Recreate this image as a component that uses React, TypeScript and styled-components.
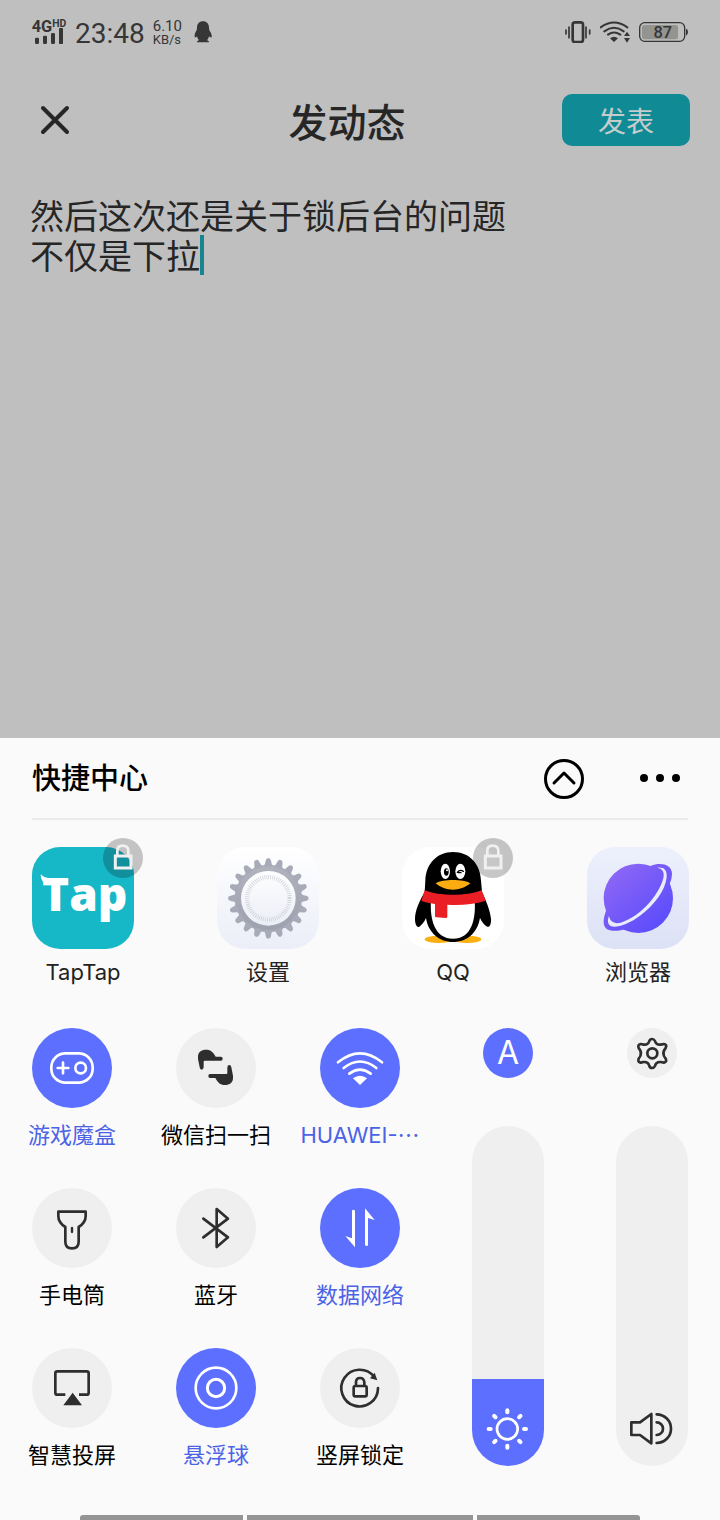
import React, { useState } from 'react';
import styled, { createGlobalStyle, css } from 'styled-components';

const cjk = '"Noto Sans CJK SC", sans-serif';
const accent = '#5c6fff';
const ink = '#2e2e2e';

const GlobalStyle = createGlobalStyle`
  *, *::before, *::after { box-sizing: border-box; }
  body { margin: 0; background: #bfbfbf; font-family: Inter, ${cjk}; }
  button { border: 0; padding: 0; background: none; color: inherit; font: inherit; cursor: pointer; }
  svg { display: block; }
`;

const Screen = styled.main`
  display: flex;
  flex-direction: column;
  min-height: 100vh;
`;

/* ---------- status bar ---------- */

const StatusBar = styled.div`
  display: flex;
  align-items: center;
  justify-content: space-between;
  height: 64px;
  padding: 0 32px;
  color: #363636;
  font-family: Roboto, sans-serif;
`;

const StatusGroup = styled.div<{ $gap: number }>`
  display: flex;
  align-items: center;
  gap: ${(p) => p.$gap}px;
`;

const Clock = styled.time`
  font-size: 28px;
  line-height: 32px;
  padding-top: 4px;
`;

const Speed = styled.div`
  display: flex;
  flex-direction: column;
  font-size: 15px;
  line-height: 13px;
  padding: 2px 5px 0 1px;
`;

const SpeedUnit = styled.span`
  font-size: 13px;
`;

/* ---------- composer ---------- */

const Composer = styled.section`
  display: flex;
  flex: 1;
  flex-direction: column;
  min-height: 400px;
  color: #262626;
  font-family: ${cjk};
`;

const ComposerHeader = styled.header`
  display: grid;
  grid-template-columns: 102px 1fr 128px;
  align-items: center;
  padding: 30px 30px 0;
`;

const CloseButton = styled.button`
  justify-self: start;
`;

const ComposerTitle = styled.h1`
  margin: 0;
  font-size: 39px;
  font-weight: 500;
  line-height: 50px;
  text-align: center;
`;

const PublishButton = styled.button`
  height: 52px;
  border-radius: 10px;
  background: #108b96;
  color: #c4cccc;
  font-size: 28px;
`;

const Editor = styled.div`
  position: relative;
  display: flex;
  flex: 1;
  margin: 49px 30px 0;
  font-size: 34px;
  line-height: 40px;
`;

const EditorInput = styled.textarea`
  flex: 1;
  padding: 0;
  border: 0;
  outline: 0;
  resize: none;
  background: transparent;
  color: inherit;
  caret-color: transparent;
  font: inherit;
`;

const Caret = styled.span<{ $column: number; $line: number }>`
  position: absolute;
  left: ${(p) => p.$column}em;
  top: ${(p) => p.$line * 40}px;
  width: 4px;
  height: 40px;
  background: #16858f;
  pointer-events: none;
`;

/* ---------- shortcut sheet ---------- */

const Sheet = styled.section`
  display: flex;
  flex-direction: column;
  background: #fafafa;
  color: #000;
`;

const SheetHeader = styled.header`
  display: flex;
  align-items: center;
  gap: 54px;
  height: 82px;
  margin: 0 32px;
  padding-right: 8px;
  border-bottom: 2px solid #ebebeb;
`;

const SheetTitle = styled.h2`
  flex: 1;
  margin: 0;
  font-family: ${cjk};
  font-size: 29px;
  font-weight: 500;
  line-height: 36px;
  padding-bottom: 4px;
`;

const AppRow = styled.nav`
  display: flex;
  justify-content: space-between;
  padding: 27px 31px 0 32px;
`;

const AppButton = styled.button`
  display: flex;
  flex-direction: column;
  align-items: center;
  gap: 8px;
  color: #222;
  font-size: 22px;
  line-height: 30px;
`;

const AppIcon = styled.span<{ $background: string }>`
  position: relative;
  width: 102px;
  height: 102px;
  border-radius: 28px;
  background: ${(p) => p.$background};
`;

const LockBadge = styled.span`
  position: absolute;
  top: -9px;
  right: -9px;
  width: 40px;
  height: 40px;
  border-radius: 50%;
  background: rgba(0, 0, 0, 0.22);
`;

const Controls = styled.div`
  display: flex;
  padding-top: 41px;
`;

const TileGrid = styled.div`
  display: grid;
  grid-template-columns: repeat(3, 1fr);
  row-gap: 37px;
  width: 60%;
`;

const TileButton = styled.button<{ $on: boolean }>`
  display: flex;
  flex-direction: column;
  align-items: center;
  gap: 11px;
  color: ${(p) => (p.$on ? '#4c63e6' : '#000')};
  font-size: 22px;
  line-height: 32px;
  white-space: nowrap;
`;

const Ellipsis = styled.span`
  font-family: ${cjk};
  line-height: 0;
`;

const discColours = css<{ $on: boolean }>`
  border-radius: 50%;
  background: ${(p) => (p.$on ? accent : '#efefef')};
  color: ${(p) => (p.$on ? '#fff' : ink)};
`;

const TileDisc = styled.span<{ $on: boolean }>`
  ${discColours}
  width: 80px;
  height: 80px;
`;

const SliderArea = styled.div`
  display: flex;
  flex: 1;
  justify-content: space-between;
  padding: 0 32px 0 40px;
`;

const SliderColumn = styled.div`
  display: flex;
  flex-direction: column;
  align-items: center;
  gap: 48px;
  width: 72px;
`;

const RoundButton = styled.button<{ $on: boolean }>`
  ${discColours}
  width: 50px;
  height: 50px;
  font-size: 32px;
  line-height: 50px;
`;

const SliderLabel = styled.label<{ $on: boolean }>`
  position: relative;
  color: ${(p) => (p.$on ? '#fff' : ink)};
`;

const SliderInput = styled.input`
  display: block;
  appearance: none;
  writing-mode: vertical-lr;
  direction: rtl;
  width: 72px;
  height: 340px;
  margin: 0;
  border-radius: 36px;
  outline: 0;
  background: linear-gradient(to top, ${accent} var(--level), #efefef var(--level));

  &::-webkit-slider-thumb {
    appearance: none;
    width: 72px;
    height: 1px;
    background: transparent;
  }
`;

const SliderIcon = styled.span`
  position: absolute;
  bottom: 0;
  left: 0;
  pointer-events: none;
`;

const GestureBar = styled.div`
  display: flex;
  gap: 4px;
  margin: 44px 80px 0;
`;

const GestureHandle = styled.span<{ $grow: number; $radius: string }>`
  flex: ${(p) => p.$grow} 1 0;
  height: 5px;
  border-radius: ${(p) => p.$radius};
  background: #949494;
`;

/* ---------- icons ---------- */

type IconProps = { w: number; h?: number; box: string; children: React.ReactNode };

const Icon = ({ w, h = w, box, children }: IconProps) => (
  <svg width={w} height={h} viewBox={box} aria-hidden="true" fill="none" stroke="none">
    {children}
  </svg>
);

const line = (width: number) => ({
  stroke: 'currentColor',
  strokeWidth: width,
  strokeLinecap: 'round' as const,
  strokeLinejoin: 'round' as const,
});

const SignalIcon = () => (
  <Icon w={36} h={28} box="36 51 108 84">
    <g fill="currentColor" fontFamily="Roboto, sans-serif" fontWeight="700">
      <text x="35" y="93" fontSize="49">4G</text>
      <text x="97" y="78" fontSize="31">HD</text>
      <rect x="45" y="110" width="12" height="19" rx="4" />
      <rect x="69" y="104" width="12" height="25" rx="4" />
      <rect x="93" y="96" width="12" height="33" rx="4" />
      <rect x="117" y="81" width="12" height="48" rx="2" />
    </g>
  </Icon>
);

const NoticeIcon = () => (
  <Icon w={18} h={22} box="523 65 54 66">
    <path
      fill="currentColor"
      d="M550 66C539 66 532 74 532 85L531 93C527 99 524 106 525 112C526 117 530 114 532 111C533 116 535 120 538 123C534 124 532 126 532 129H549H568C568 126 566 124 562 123C565 120 567 116 568 111C571 114 575 117 576 112C577 106 573 99 569 93L568 85C568 74 561 66 550 66Z"
    />
  </Icon>
);

const VibrateIcon = () => (
  <Icon w={26} h={22} box="75 63 78 66">
    <rect x="98" y="67" width="31" height="59" rx="7" stroke="currentColor" strokeWidth="8" />
    <path d="M87 81V113M78 90V102M138 81V113M149 90V102" {...line(5)} />
  </Icon>
);

const StatusWifiIcon = () => (
  <Icon w={30} h={22} box="180 63 90 66">
    <path d="M182 82Q222 53 262 82M193 94Q222 73 251 94M204 104Q222 91 241 104" {...line(6)} />
    <path d="M222 126L210 115Q222 106 234 115ZM261 95L270 108H252ZM252 114H270L261 128Z" fill="currentColor" />
  </Icon>
);

const BatteryIcon = () => (
  <Icon w={49} h={22} box="297 63 147 66">
    <rect x="299" y="68" width="135" height="56" rx="15" stroke="currentColor" strokeWidth="4" />
    <rect x="306" y="75" width="108" height="43" rx="7" fill="#93938f" />
    <path d="M438 86Q444 87 444 96T438 107Z" fill="currentColor" />
    <text x="368" y="113" fontSize="49" fontWeight="500" fontFamily="Roboto, sans-serif" textAnchor="middle" fill="currentColor">
      87
    </text>
  </Icon>
);

const CloseIcon = () => (
  <Icon w={50} box="0 0 50 50">
    <path d="M13 13L37 37M37 13L13 37" {...line(4)} />
  </Icon>
);

const LockIcon = () => (
  <Icon w={40} box="249 24 120 120">
    <path d="M292 78V62Q292 47 308 47T325 62V78" stroke="#f0f0f0" strokeWidth="8" />
    <rect x="286" y="78" width="47" height="36" stroke="#f0f0f0" strokeWidth="9" />
  </Icon>
);

const TapTapArt = () => (
  <Icon w={102} box="36 51 306 306">
    <text x="66" y="243" fontFamily="'Open Sans', sans-serif" fontWeight="800" fontSize="138" fill="#fff">
      Tap
    </text>
    <path d="M62 133Q70 142 84 144L84 162Q62 160 62 133Z" fill="#fff" />
  </Icon>
);

const teeth = Array.from({ length: 20 }, (_, i) => i * 18);

const SettingsArt = () => (
  <Icon w={102} box="591 51 306 306">
    <defs>
      <linearGradient id="gearMetal" x1="0" y1="85" x2="0" y2="325" gradientUnits="userSpaceOnUse">
        <stop offset="0" stopColor="#b3b5bf" />
        <stop offset="1" stopColor="#9b9fac" />
      </linearGradient>
      <linearGradient id="gearFace" x1="0" y1="120" x2="0" y2="285" gradientUnits="userSpaceOnUse">
        <stop offset="0" stopColor="#ffffff" />
        <stop offset="1" stopColor="#eceef6" />
      </linearGradient>
    </defs>
    <circle cx="745" cy="205" r="101" fill="url(#gearMetal)" />
    {teeth.map((angle) => (
      <path
        key={angle}
        d="M729 110Q736 104 737 92Q738 84 745 84T753 92Q754 104 761 110Z"
        fill="#a8abb7"
        transform={`rotate(${angle} 745 205)`}
      />
    ))}
    <circle cx="745" cy="205" r="82" fill="url(#gearFace)" />
    <circle cx="745" cy="205" r="64" stroke="#c9cbd3" strokeWidth="12" strokeDasharray="2 4" />
    <circle cx="745" cy="205" r="57" fill="url(#gearFace)" stroke="#e3e4ea" strokeWidth="1" />
  </Icon>
);

const QqArt = () => (
  <Icon w={102} box="36 51 306 306">
    <ellipse cx="146" cy="328" rx="42" ry="11" fill="#fbb011" />
    <ellipse cx="232" cy="328" rx="42" ry="11" fill="#fbb011" />
    <path
      fill="#000"
      d="M189 66C140 66 107 103 106 152L104 185C90 212 74 240 75 270C76 286 82 293 88 290C96 285 103 275 108 264C115 310 150 336 189 336C230 336 262 310 270 264C276 276 284 287 292 290C300 292 304 280 303 266C300 240 288 212 276 186L273 152C271 103 240 66 189 66Z"
    />
    <path d="M123 212C119 268 134 326 189 326C244 326 258 268 254 212Z" fill="#fff" />
    <path
      fill="#ea1f25"
      d="M104 181C150 199 230 199 275 181L287 212C250 223 210 227 172 224V260Q172 264 168 264L139 262Q135 262 135 258V222Q112 219 94 213Z"
    />
    <ellipse cx="166" cy="124" rx="14" ry="23" fill="#fff" />
    <ellipse cx="211" cy="124" rx="15" ry="23" fill="#fff" />
    <ellipse cx="169" cy="126" rx="7" ry="11" fill="#000" />
    <circle cx="171" cy="121" r="3" fill="#fff" />
    <path d="M202 127Q210 117 220 124M205 128H213" stroke="#000" strokeWidth="4" strokeLinecap="round" />
    <path d="M137 160C158 147 220 147 241 160C226 173 206 179 189 179C170 179 151 172 137 160Z" fill="#fbac10" />
  </Icon>
);

const BrowserArt = () => (
  <Icon w={102} box="591 51 306 306">
    <defs>
      <linearGradient id="planet" x1="670" y1="120" x2="820" y2="290" gradientUnits="userSpaceOnUse">
        <stop offset="0" stopColor="#8d66f6" />
        <stop offset="1" stopColor="#5a4cfb" />
      </linearGradient>
    </defs>
    <g fill="url(#planet)">
      <circle cx="745" cy="205" r="104" />
      <path d="M782 108C810 96 846 102 846 132Q846 148 838 164L790 190ZM650 238C640 262 636 286 650 297C664 306 690 302 712 296L700 220Z" />
    </g>
    <path
      d="M802 113C822 111 832 120 830 142C826 182 792 226 752 256C718 282 682 294 664 289C652 284 652 270 657 258C660 274 673 283 692 278C722 268 752 247 778 218C804 188 819 157 821 138C822 123 816 116 802 113Z"
      fill="#e9ecfb"
    />
  </Icon>
);

const ChevronIcon = () => (
  <Icon w={40} h={42} box="0 0 40 42">
    <circle cx="20" cy="22" r="18.5" stroke="currentColor" strokeWidth="3" />
    <path d="M10 26L20 16L30 26" {...line(3)} />
  </Icon>
);

const MoreIcon = () => (
  <Icon w={42} h={42} box="0 0 42 42">
    <g fill="currentColor">
      <circle cx="6" cy="21" r="4" />
      <circle cx="22" cy="21" r="4" />
      <circle cx="38" cy="21" r="4" />
    </g>
  </Icon>
);

const GameArt = () => (
  <>
    <rect x="124" y="130" width="124" height="88" rx="42" {...line(8)} />
    <path d="M143 174H175M159 158V190" {...line(8)} />
    <circle cx="212" cy="174" r="16" {...line(8)} />
  </>
);

const scanHand =
  'M564 140C564 126 574 119 588 119C603 119 610 127 617 140H633Q638 140 638 146T633 152H584Q581 152 581 155V172Q580 179 575 179T569 172L564 147Z';

const ScanArt = () => (
  <g fill="currentColor">
    <path d={scanHand} />
    <path d={scanHand} transform="rotate(180 616.5 172)" />
  </g>
);

const WifiArt = () => (
  <>
    <path d="M984 157Q1050 103 1116 157M1001 174Q1050 135 1099 174M1018 191Q1050 167 1082 191" {...line(8)} />
    <path d="M1050 225L1029 205Q1050 190 1071 205Z" fill="currentColor" />
  </>
);

const TorchArt = () => (
  <>
    <path d="M145 125H227V138Q227 158 206 171V215Q206 235 186 235T166 215V171Q145 158 145 138Z" {...line(8)} />
    <path d="M186 174V186" {...line(7)} />
  </>
);

const BluetoothArt = () => <path d="M580 146L654 202L620 231V117L654 146L580 202" {...line(8)} />;

const DataArt = () => (
  <g fill="currentColor">
    <path d="M1026 123Q1026 119 1030 119T1035 123V232L1006 198L1026 205Z" />
    <path d="M1065 115L1094 150L1074 144V224Q1074 228 1070 228T1065 224Z" />
  </g>
);

const CastArt = () => (
  <>
    <path d="M166 194H142Q136 194 136 188V130Q136 124 142 124H230Q236 124 236 130V188Q236 194 230 194H207" stroke="currentColor" strokeWidth="8" />
    <path d="M188 188L216 226H160Z" fill="currentColor" />
  </>
);

const BallArt = () => (
  <>
    <circle cx="618" cy="174" r="61" {...line(8)} />
    <circle cx="618" cy="174" r="26" {...line(9)} />
  </>
);

const RotationArt = () => (
  <>
    <path d="M1104 174A55 55 0 1 1 1092 140" {...line(8)} />
    <path d="M1094 128L1102 151L1080 145Z" fill="currentColor" />
    <rect x="1031" y="168" width="39" height="31" rx="5" {...line(8)} />
    <path d="M1038 167V157Q1038 144 1050 144T1063 157V167" {...line(8)} />
  </>
);

const GearIcon = () => (
  <Icon w={50} box="531 54 150 150">
    <path
      d="M598 93Q600 87 606 87T615 93Q618 105 632 104L642 102Q652 104 647 114Q633 130 647 146Q652 156 642 158L632 156Q618 155 615 168Q612 174 606 174T598 168Q595 155 581 156L572 158Q562 156 566 146Q580 130 566 114Q562 104 572 102L581 104Q595 105 598 93Z"
      {...line(8)}
    />
    <circle cx="607" cy="130" r="15" {...line(8)} />
  </Icon>
);

const SunIcon = () => (
  <Icon w={72} box="66 102 216 216">
    <circle cx="172" cy="207" r="31" {...line(8)} />
    {[0, 45, 90, 135, 180, 225, 270, 315].map((angle) => (
      <path key={angle} d="M172 151V157" {...line(12)} transform={`rotate(${angle} 172 207)`} />
    ))}
  </Icon>
);

const SpeakerIcon = () => (
  <Icon w={72} box="498 102 216 216">
    <path d="M544 187H570L604 162V250L570 225H544Z" {...line(8)} />
    <path d="M620 187A19 19 0 0 1 620 225M620 163A43 43 0 0 1 620 249" {...line(8)} />
  </Icon>
);

/* ---------- data ---------- */

const apps = [
  { name: 'TapTap', background: '#16b8c8', locked: true, Art: TapTapArt },
  { name: '设置', background: 'linear-gradient(#ffffff, #ebeef8)', locked: false, Art: SettingsArt },
  { name: 'QQ', background: '#ffffff', locked: true, Art: QqArt },
  { name: '浏览器', background: 'linear-gradient(#edf0fc, #dce1f5)', locked: false, Art: BrowserArt },
];

const tiles = [
  { name: '游戏魔盒', on: true, box: '66 54 240 240', Art: GameArt },
  { name: '微信扫一扫', on: false, box: '498 54 240 240', Art: ScanArt },
  { name: 'HUAWEI-', cut: true, on: true, box: '930 54 240 240', Art: WifiArt },
  { name: '手电筒', on: false, box: '66 54 240 240', Art: TorchArt },
  { name: '蓝牙', on: false, box: '498 54 240 240', Art: BluetoothArt },
  { name: '数据网络', on: true, box: '930 54 240 240', Art: DataArt },
  { name: '智慧投屏', on: false, box: '66 54 240 240', Art: CastArt },
  { name: '悬浮球', on: true, box: '498 54 240 240', Art: BallArt },
  { name: '竖屏锁定', on: false, box: '930 54 240 240', Art: RotationArt },
];

type Tile = (typeof tiles)[number];

const ToggleTile = ({ tile }: { tile: Tile }) => {
  const [on, setOn] = useState(tile.on);
  return (
    <TileButton type="button" $on={on} aria-pressed={on} onClick={() => setOn(!on)}>
      <TileDisc $on={on}>
        <Icon w={80} box={tile.box}>
          <tile.Art />
        </Icon>
      </TileDisc>
      <span>
        {tile.name}
        {tile.cut && <Ellipsis lang="zh-CN">⋯</Ellipsis>}
      </span>
    </TileButton>
  );
};

type LevelProps = { name: string; initial: number; children: React.ReactNode };

const LevelSlider = ({ name, initial, children }: LevelProps) => {
  const [level, setLevel] = useState(initial);
  return (
    <SliderLabel $on={level > 30}>
      <SliderInput
        type="range"
        min={0}
        max={255}
        value={level}
        aria-label={name}
        onChange={(e) => setLevel(Number(e.target.value))}
        style={{ '--level': `${(level / 255) * 100}%` } as React.CSSProperties}
      />
      <SliderIcon>{children}</SliderIcon>
    </SliderLabel>
  );
};

export default function App() {
  const [draft, setDraft] = useState('然后这次还是关于锁后台的问题\n不仅是下拉');
  const [auto, setAuto] = useState(true);
  const lines = draft.split('\n');

  return (
    <Screen>
      <GlobalStyle />
      <StatusBar>
        <StatusGroup $gap={7}>
          <SignalIcon />
          <Clock>23:48</Clock>
          <Speed>
            6.10
            <SpeedUnit>KB/s</SpeedUnit>
          </Speed>
          <NoticeIcon />
        </StatusGroup>
        <StatusGroup $gap={9}>
          <VibrateIcon />
          <StatusWifiIcon />
          <BatteryIcon />
        </StatusGroup>
      </StatusBar>

      <Composer>
        <ComposerHeader>
          <CloseButton type="button" aria-label="关闭">
            <CloseIcon />
          </CloseButton>
          <ComposerTitle>发动态</ComposerTitle>
          <PublishButton type="button">发表</PublishButton>
        </ComposerHeader>
        <Editor>
          <EditorInput aria-label="动态内容" value={draft} onChange={(e) => setDraft(e.target.value)} />
          <Caret $column={lines[lines.length - 1].length} $line={lines.length - 1} />
        </Editor>
      </Composer>

      <Sheet>
        <SheetHeader>
          <SheetTitle>快捷中心</SheetTitle>
          <button type="button" aria-label="收起">
            <ChevronIcon />
          </button>
          <button type="button" aria-label="更多">
            <MoreIcon />
          </button>
        </SheetHeader>

        <AppRow>
          {apps.map(({ name, background, locked, Art }) => (
            <AppButton type="button" key={name}>
              <AppIcon $background={background}>
                <Art />
                {locked && (
                  <LockBadge>
                    <LockIcon />
                  </LockBadge>
                )}
              </AppIcon>
              {name}
            </AppButton>
          ))}
        </AppRow>

        <Controls>
          <TileGrid>
            {tiles.map((tile) => (
              <ToggleTile key={tile.name} tile={tile} />
            ))}
          </TileGrid>
          <SliderArea>
            <SliderColumn>
              <RoundButton type="button" $on={auto} aria-pressed={auto} onClick={() => setAuto(!auto)}>
                A
              </RoundButton>
              <LevelSlider name="亮度" initial={65}>
                <SunIcon />
              </LevelSlider>
            </SliderColumn>
            <SliderColumn>
              <RoundButton type="button" $on={false} aria-label="声音设置">
                <GearIcon />
              </RoundButton>
              <LevelSlider name="音量" initial={0}>
                <SpeakerIcon />
              </LevelSlider>
            </SliderColumn>
          </SliderArea>
        </Controls>

        <GestureBar>
          <GestureHandle $grow={163} $radius="3px 0 0 0" />
          <GestureHandle $grow={226} $radius="0" />
          <GestureHandle $grow={163} $radius="0 3px 0 0" />
        </GestureBar>
      </Sheet>
    </Screen>
  );
}
